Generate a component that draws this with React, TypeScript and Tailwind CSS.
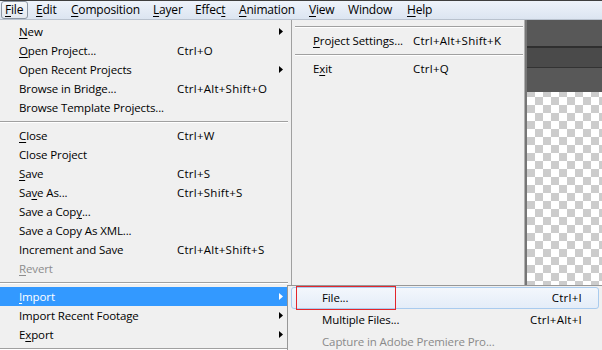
import React from 'react'

type Row =
  | 'sep'
  | { label: string; shortcut?: string; sub?: boolean; disabled?: boolean; active?: boolean }

const MENUBAR = [
  { label: '&File', w: 'w-[35px]' },
  { label: '&Edit', w: 'w-[35px]' },
  { label: '&Composition', w: 'w-[82px]' },
  { label: '&Layer', w: 'w-[42px]' },
  { label: 'Effec&t', w: 'w-[44px]' },
  { label: '&Animation', w: 'w-[70px]' },
  { label: '&View', w: 'w-[39px]' },
  { label: 'Window', w: 'w-[59px]' },
  { label: '&Help', w: 'w-[40px]' },
]

const LEFT_COL: Row[] = [
  { label: '&New', sub: true },
  { label: '&Open Project...', shortcut: 'Ctrl+O' },
  { label: 'Open Recent Projects', sub: true },
  { label: 'Browse in Bridge...', shortcut: 'Ctrl+Alt+Shift+O' },
  { label: 'Browse Template Projects...' },
  'sep',
  { label: '&Close', shortcut: 'Ctrl+W' },
  { label: 'Close Project' },
  { label: '&Save', shortcut: 'Ctrl+S' },
  { label: 'Sa&ve As...', shortcut: 'Ctrl+Shift+S' },
  { label: 'Save a Cop&y...' },
  { label: 'Save a Copy As XML...' },
  { label: 'Increment and Save', shortcut: 'Ctrl+Alt+Shift+S' },
  { label: '&Revert', disabled: true },
  'sep',
  { label: '&Import', sub: true, active: true },
  { label: 'Import Recent Footage', sub: true },
  { label: 'E&xport', sub: true },
  'sep',
]

const RIGHT_COL: Row[] = [
  'sep',
  { label: '&Project Settings...', shortcut: 'Ctrl+Alt+Shift+K' },
  'sep',
  { label: 'E&xit', shortcut: 'Ctrl+Q' },
]

function Mn({ text }: { text: string }) {
  const i = text.indexOf('&')
  if (i < 0) return <>{text}</>
  return (
    <>
      {text.slice(0, i)}
      <span className="underline decoration-1 underline-offset-2">{text[i + 1]}</span>
      {text.slice(i + 2)}
    </>
  )
}

function Arrow({ white }: { white?: boolean }) {
  return (
    <svg width="4" height="7" viewBox="0 0 4 7" className="ml-auto mr-[4px] shrink-0">
      <path d="M0 0L4 3.5L0 7Z" fill={white ? '#ffffff' : '#000000'} />
    </svg>
  )
}

function Sep({ wide }: { wide?: boolean }) {
  return (
    <div className={`h-[9px] pt-[4px] ${wide ? 'w-[288px]' : 'ml-[3px] w-[228px]'}`}>
      <div className="h-[2px] border-t border-b border-t-[#a0a0a0] border-b-white" />
    </div>
  )
}

export default function App() {
  return (
    <div className="relative h-[350px] w-[602px] overflow-hidden bg-[#f0f0f0] font-['Open_Sans',sans-serif] text-[11.5px] tracking-[-0.12px] text-black">
      {/* menubar */}
      <div className="flex h-[20px] border-t border-b border-t-[#3f3f3f] border-b-[#b9c2ce] bg-linear-to-b from-[#eef3fa] to-[#dce5f1] pl-[1px] text-[12px] tracking-[-0.2px]">
        {MENUBAR.map((m, i) =>
          i === 0 ? (
            <div key={m.label} className="w-[35px]">
              <div className="flex h-[18px] w-[27px] items-center rounded-[3px] border border-[#8c96a3] bg-linear-to-b from-[#f6f8fb] to-[#e3e8ef] pl-[3px] leading-none">
                <Mn text={m.label} />
              </div>
            </div>
          ) : (
            <div key={m.label} className={`${m.w} flex h-[18px] items-center leading-none whitespace-nowrap`}>
              <Mn text={m.label} />
            </div>
          )
        )}
      </div>

      <div className="flex h-[330px]">
        {/* first column */}
        <div className="w-[292px] shrink-0 border-r border-[#a0a0a0] pt-[2px]">
          {LEFT_COL.map((r, i) =>
            r === 'sep' ? (
              <Sep key={i} wide />
            ) : (
              <div
                key={i}
                className={`flex h-[19px] w-[287px] items-center pl-[19px] ${
                  r.active ? 'bg-[#3399ff] text-white' : ''
                } ${r.disabled ? 'text-[#8d8d8d]' : ''}`}
              >
                <span className="w-[158px] shrink-0 whitespace-nowrap">
                  <Mn text={r.label} />
                </span>
                <span className="whitespace-nowrap tracking-[0.25px]">{r.shortcut}</span>
                {r.sub && <Arrow white={r.active} />}
              </div>
            )
          )}
        </div>

        {/* second column */}
        <div className="w-[233px] shrink-0 border-r border-[#b0b0b0] pt-[2px]">
          {RIGHT_COL.map((r, i) =>
            r === 'sep' ? (
              <Sep key={i} />
            ) : (
              <div key={i} className="flex h-[19px] items-center pl-[21px]">
                <span className="w-[100px] shrink-0 whitespace-nowrap">
                  <Mn text={r.label} />
                </span>
                <span className="whitespace-nowrap tracking-[0.25px]">{r.shortcut}</span>
              </div>
            )
          )}
        </div>

        {/* composition panel behind the menu */}
        <div className="flex flex-1 flex-col border-l-2 border-[#767676]">
          <div className="h-[26px] bg-[#585858]" />
          <div className="h-[2px] bg-[#2f2f2f]" />
          <div className="h-[19px] bg-[#4a4a4a]" />
          <div className="h-[1px] bg-[#333333]" />
          <div className="h-[24px] bg-[#585858]" />
          <div className="flex-1 bg-[image:conic-gradient(#ffffff_25%,#cccccc_0_50%,#ffffff_0_75%,#cccccc_0)] bg-[length:16px_16px] bg-[position:0_-3px]" />
        </div>
      </div>

      {/* Import submenu */}
      <div className="absolute left-[287px] top-[285px] h-[80px] w-[330px] border border-[#979797] bg-[#f0f0f0] pl-[3px] pt-[1px]">
        <div className="flex h-[22px] w-[308px] items-center rounded-[3px] border border-[#a9cbee] bg-linear-to-b from-[#f3f7fc] to-[#e4edf8] pl-[30px] pr-[16px]">
          <span className="whitespace-nowrap">File...</span>
          <span className="ml-auto whitespace-nowrap tracking-[0.25px]">Ctrl+I</span>
        </div>
        <div className="flex h-[22px] w-[308px] items-center pl-[31px] pr-[17px]">
          <span className="whitespace-nowrap">Multiple Files...</span>
          <span className="ml-auto whitespace-nowrap tracking-[0.25px]">Ctrl+Alt+I</span>
        </div>
        <div className="flex h-[22px] w-[308px] items-center pl-[31px] pr-[17px] text-[#8a8a8a]">
          <span className="whitespace-nowrap">Capture in Adobe Premiere Pro...</span>
        </div>
      </div>

      {/* red annotation box */}
      <div className="absolute left-[296px] top-[286px] h-[24px] w-[100px] border border-[#e3262b]" />
    </div>
  )
}
